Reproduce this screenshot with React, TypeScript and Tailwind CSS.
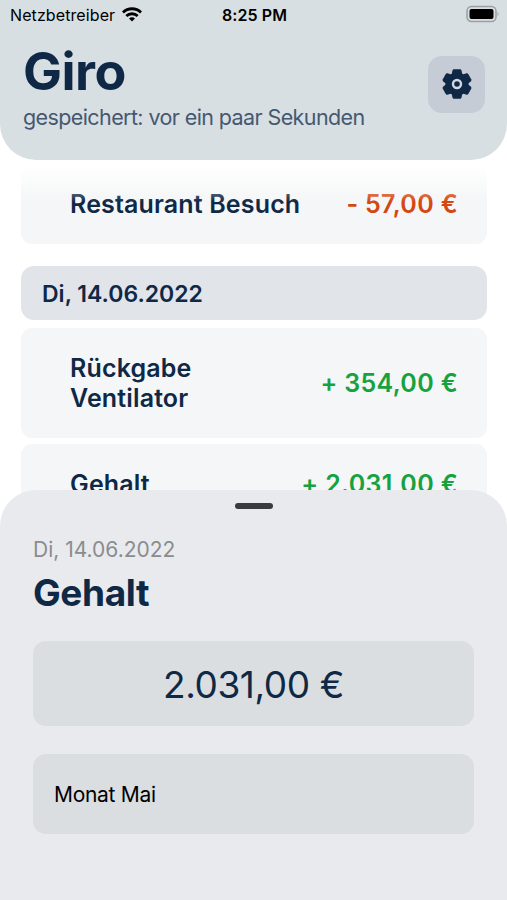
type Transaction = {
  title: string;
  amount: string;
  income: boolean;
};

const StatusBar = () => (
  <div className="grid h-[30px] grid-cols-3 items-center pr-2 pl-[10px] text-black">
    <div className="flex items-center gap-[7px]">
      <span className="text-[16px] leading-none tracking-[0.1px]">Netzbetreiber</span>
      <svg className="mb-[2px]" width="20" height="15" viewBox="0 0 20 15" fill="none" stroke="currentColor" strokeWidth="2.8">
        <path d="M1 5.5a12.7 12.7 0 0 1 18 0" />
        <path d="M4.3 9.1a8.1 8.1 0 0 1 11.4 0" />
        <path d="M10 14.6 7 11.6a4.2 4.2 0 0 1 6 0Z" fill="currentColor" stroke="none" />
      </svg>
    </div>
    <span className="text-center text-[16px] leading-none font-semibold tracking-[0.1px]">8:25 PM</span>
    <svg className="mb-[2px] justify-self-end" width="33" height="18" viewBox="0 0 33 18">
      <rect x="1" y="1.5" width="29" height="15" rx="4.5" fill="none" stroke="#9a9fa2" strokeWidth="1.5" />
      <rect x="3.5" y="4" width="24" height="10" rx="2" fill="#000" />
      <path d="M31.5 7c1.4.6 1.4 3.4 0 4Z" fill="#9a9fa2" />
    </svg>
  </div>
);

const teeth = [0, 60, 120, 180, 240, 300];

const GearIcon = () => (
  <svg width="32" height="32" viewBox="-16 -16 32 32" fill="currentColor">
    <circle r="11.5" />
    {teeth.map((angle) => (
      <path
        key={angle}
        transform={`rotate(${angle})`}
        d="M-5.6-8.5-4.5-13.5Q-4.2-14.7-3-14.7H3Q4.2-14.7 4.5-13.5L5.6-8.5Z"
      />
    ))}
    <circle r="4" fill="none" stroke="#d0d8e1" strokeWidth="2.4" />
  </svg>
);

const Header = () => (
  <header className="relative z-10 h-40 rounded-b-[36px] bg-[#d8dfe3]">
    <StatusBar />
    <div className="flex justify-between pr-[22px] pl-[23px]">
      <div>
        <h1 className="mt-[12px] text-[52px] leading-[60px] font-bold tracking-[-0.5px]">Giro</h1>
        <p className="text-[21.5px] leading-[30px] tracking-[-0.6px] whitespace-nowrap text-[#465870]">
          gespeichert: vor ein paar Sekunden
        </p>
      </div>
      <button className="mt-[26px] flex size-[57px] items-center justify-center rounded-[14px] bg-[#c5ccd6] pb-[2px]">
        <GearIcon />
      </button>
    </div>
  </header>
);

const DayHeader = ({ date }: { date: string }) => (
  <div className="mt-[22px] flex h-[54px] items-center rounded-[13px] bg-[#e1e4e8] px-[21px] pt-[2px] text-[23px] font-semibold">
    {date}
  </div>
);

const TransactionRow = ({ title, amount, income }: Transaction) => (
  <div className="flex items-center justify-between rounded-[11px] bg-[#f4f6f7] py-[25px] pr-[29px] pl-[49px] text-[25px] leading-[30px] font-semibold tracking-[0.15px]">
    <span className="max-w-[240px]">{title}</span>
    <span
      className={
        income
          ? "tracking-[0.35px] whitespace-nowrap text-[#16a23f]"
          : "tracking-[0.35px] whitespace-nowrap text-[#d4470f]"
      }
    >
      {amount}
    </span>
  </div>
);

const DetailSheet = () => (
  <section className="absolute inset-x-0 bottom-0 z-20 h-[410px] rounded-t-[36px] bg-[#e8eaee] px-[33px]">
    <div className="mx-auto mt-[13px] h-[6px] w-[38px] rounded-full bg-[#3a3b3d]" />
    <p className="mt-[26px] text-[21px] leading-[30px] text-[#8b8c8e]">Di, 14.06.2022</p>
    <h2 className="mt-[6px] text-[37px] leading-[44px] font-bold tracking-[-0.4px]">Gehalt</h2>
    <div className="mt-[26px] flex h-[85px] items-center justify-center rounded-[13px] bg-[#dadee1] pt-[2px] text-[37px] tracking-[-0.4px]">
      2.031,00 €
    </div>
    <div className="mt-[28px] flex h-[80px] items-center rounded-[13px] bg-[#dadee1] px-[21px] pt-px text-[21px] tracking-[-0.3px] text-black">
      Monat Mai
    </div>
  </section>
);

export default function App() {
  return (
    <div className="relative h-[900px] w-full overflow-hidden bg-white font-['Inter',sans-serif] text-[#0f2846]">
      <Header />
      <main className="relative pt-1 pr-5 pl-[21px]">
        <div className="pointer-events-none absolute inset-x-0 top-0 h-[42px] bg-linear-to-b from-white from-15% to-transparent" />
        <TransactionRow title="Restaurant Besuch" amount="- 57,00 €" income={false} />
        <DayHeader date="Di, 14.06.2022" />
        <div className="mt-2 flex flex-col gap-[6px]">
          <TransactionRow title="Rückgabe Ventilator" amount="+ 354,00 €" income />
          <TransactionRow title="Gehalt" amount="+ 2.031,00 €" income />
        </div>
      </main>
      <DetailSheet />
    </div>
  );
}
